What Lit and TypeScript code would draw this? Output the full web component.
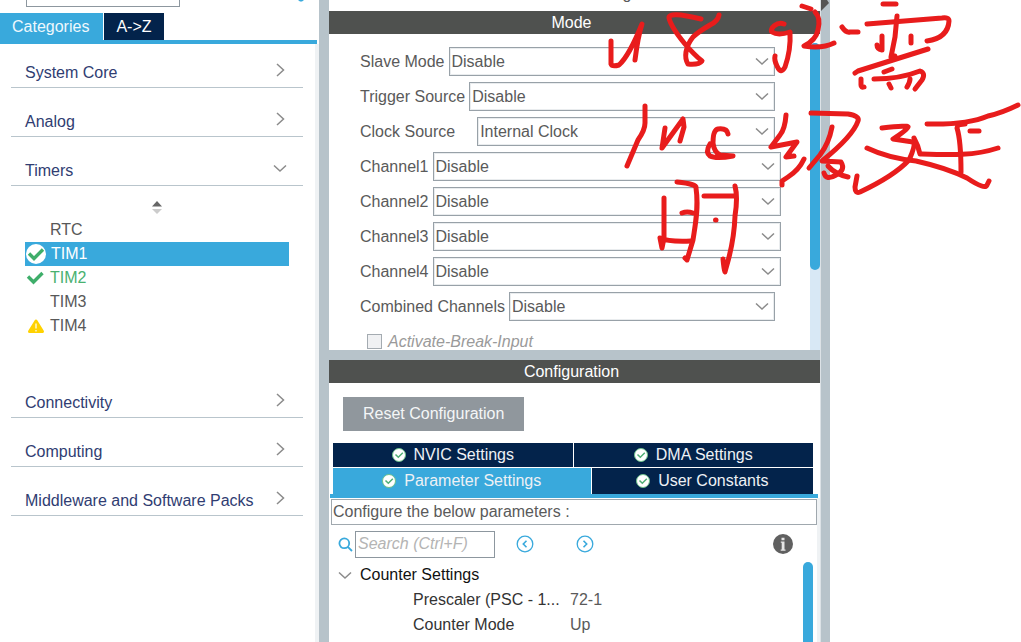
import { LitElement, html, css, svg } from "lit";
import { customElement, property, state } from "lit/decorators.js";
import { classMap } from "lit/directives/class-map.js";

type Status = "none" | "selected" | "ok" | "warning";

const shared = css`
  *, *::before, *::after { box-sizing: border-box; }
  button, input, select { font: inherit; letter-spacing: inherit; margin: 0; border-radius: 0; }
  button { border: 0; padding: 0; background: none; cursor: pointer; }
  svg { display: block; flex: none; }
`;

const chevron = (dir: "right" | "down") => dir === "right"
  ? html`<svg width="14" height="14" viewBox="0 0 14 14" fill="none" stroke="#8b8b8b" stroke-width="1.5"><path d="M4 1 L10.5 7 L4 13"/></svg>`
  : html`<svg width="14" height="14" viewBox="0 0 14 14" fill="none" stroke="#8b8b8b" stroke-width="1.5"><path d="M1 4.5 L7 10 L13 4.5"/></svg>`;

const statusIcon = (s: Status) => {
  if (s === "selected") return html`<svg width="20" height="20" viewBox="0 0 20 20"><circle cx="10" cy="10" r="10" fill="#fff"/><path d="M3 9.5 L8 14.5 L17 5.5" fill="none" stroke="#3fae6a" stroke-width="3.4"/></svg>`;
  if (s === "ok") return html`<svg width="20" height="20" viewBox="0 0 20 20"><path d="M2 8.5 L7.5 14 L16.5 5" fill="none" stroke="#3fae6a" stroke-width="3.4"/></svg>`;
  if (s === "warning") return html`<svg width="20" height="20" viewBox="0 0 20 20"><path d="M10 5 L16.5 15.5 H3.5 Z" fill="#ffd200" stroke="#ffd200" stroke-width="3" stroke-linejoin="round"/><path d="M10 7.5 V12.5 M10 14 V15.5" stroke="#fff" stroke-width="1.2"/></svg>`;
  return html`<svg width="20" height="20"></svg>`;
};

@customElement("category-panel")
class CategoryPanel extends LitElement {
  @state() private timer = "TIM1";

  static styles = [shared, css`
    :host { display: flex; flex-direction: column; min-width: 0; overflow: hidden; color: #303d72; }
    .top { display: flex; justify-content: space-between; align-items: flex-end; height: 7px; padding: 0 14px 0 26px; }
    .top input { flex: none; width: 154px; height: 28px; border: 1px solid #8d979f; }
    .gear { align-self: flex-start; height: 2px; overflow: hidden; }
    .tabs { display: flex; gap: 1px; height: 27px; margin-top: 6px; }
    .tab { padding: 0 12px; color: #fff; background: #03234b; line-height: 27px; }
    .tab.on { background: #39a9dc; padding: 0 14px 0 12px; color: #eef8fd; }
    .bar { height: 4px; background: #39a9dc; margin-right: 2px; }
    .body { flex: 1; display: flex; flex-direction: column; gap: 5px; margin-right: 4px; padding: 0 12px 0 11px; }
    .shell { flex: 1; display: flex; flex-direction: column; background: linear-gradient(to left, #eff2f4 4px, transparent 4px); }
    .row { display: flex; justify-content: space-between; align-items: flex-end; height: 44px; width: 100%; padding: 0 16px 5px 14px; border-bottom: 1px solid #b9c5cc; color: inherit; line-height: 18px; text-align: left; }
    .row svg { margin-bottom: 5px; }
    .timers { padding: 10px 14px 31px; }
    .sort { display: block; margin: 0 auto 3px; }
    ul { list-style: none; margin: 0; padding: 0; }
    .item { display: flex; align-items: center; gap: 4px; width: 100%; height: 24px; padding-left: 1px; color: #585858; }
    .item.ok { color: #49b170; }
    .item.on { background: #39a9dc; color: #fff; gap: 5px; }
  `];

  private row(name: string, open = false) {
    return html`<button class="row" aria-expanded=${open ? "true" : "false"}><span>${name}</span>${chevron(open ? "down" : "right")}</button>`;
  }

  render() {
    const timers: [string, Status][] = [["RTC", "none"], ["TIM1", "selected"], ["TIM2", "ok"], ["TIM3", "none"], ["TIM4", "warning"]];
    return html`
      <div class="top">
        <input type="text" aria-label="Search peripherals">
        <span class="gear"><svg width="8" height="2" viewBox="0 0 8 2"><path d="M1 0 H7 L5 1.5 H3 Z" fill="#39a9dc"/></svg></span>
      </div>
      <div class="tabs">
        <button class="tab on">Categories</button>
        <button class="tab">A-&gt;Z</button>
      </div>
      <div class="bar"></div>
      <div class="shell">
        <div class="body">
          ${this.row("System Core")}
          ${this.row("Analog")}
          ${this.row("Timers", true)}
          <div class="timers">
            <button class="sort" aria-label="Sort"><svg width="12" height="14" viewBox="0 0 12 14"><path d="M1 5.5 L6 0 L11 5.5 Z" fill="#666"/><path d="M1 8 L6 13 L11 8 Z" fill="#ccc"/></svg></button>
            <ul>
              ${timers.map(([name, s]) => html`<li><button class=${classMap({ item: true, ok: s === "ok", on: name === this.timer })}
                @click=${() => { this.timer = name; }}>${statusIcon(s)}<span>${name}</span></button></li>`)}
            </ul>
          </div>
          ${this.row("Connectivity")}
          ${this.row("Computing")}
          ${this.row("Middleware and Software Packs")}
        </div>
      </div>`;
  }
}

@customElement("mode-field")
class ModeField extends LitElement {
  @property() label = "";
  @property() value = "";
  @property({ type: Boolean }) spaced = false;

  static styles = [shared, css`
    :host { display: block; }
    .field { display: flex; align-items: center; gap: 4px; height: 29px; white-space: nowrap; }
    .field.spaced { gap: 22px; }
    .box { position: relative; flex: 1; min-width: 0; display: flex; }
    select { appearance: none; width: 100%; height: 29px; padding: 0 24px 0 2px; border: 1px solid #98a1a8; outline: 1px solid #e9ecee; outline-offset: -2px; background: #fff; color: #5a5a5a; }
    .box svg { position: absolute; right: 6px; top: 7px; pointer-events: none; }
  `];

  render() {
    return html`<div class=${classMap({ field: true, spaced: this.spaced })}>
      <label for="s">${this.label}</label>
      <span class="box"><select id="s"><option>${this.value}</option></select>${chevron("down")}</span>
    </div>`;
  }
}

@customElement("mode-panel")
class ModePanel extends LitElement {
  static styles = [shared, css`
    :host { display: flex; background: #fff; height: 316px; overflow: hidden; }
    .form { flex: 1; min-width: 0; display: flex; flex-direction: column; gap: 6px; padding: 13px 29px 0 31px; }
    .narrow { margin-right: 6px; }
    .check { flex: none; display: flex; align-items: center; gap: 6px; padding-left: 7px; height: 29px; color: #9a9a9a; font-style: italic; }
    .check input { appearance: none; width: 15px; height: 15px; border: 1px solid #a4abb1; background: #f0f1f3; }
    .track { width: 10px; margin-top: 9px; background: #d8e8f5; border-radius: 5px 5px 0 0; }
    .thumb { height: 227px; border-radius: 5px; background: #39a9dc; }
  `];

  render() {
    return html`
      <div class="form">
        <mode-field class="narrow" label="Slave Mode" value="Disable"></mode-field>
        <mode-field class="narrow" label="Trigger Source" value="Disable"></mode-field>
        <mode-field class="narrow" label="Clock Source" value="Internal Clock" spaced></mode-field>
        ${[1, 2, 3, 4].map(n => html`<mode-field label="Channel${n}" value="Disable"></mode-field>`)}
        <mode-field class="narrow" label="Combined Channels" value="Disable"></mode-field>
        <label class="check"><input type="checkbox" disabled>Activate-Break-Input</label>
      </div>
      <div class="track"><div class="thumb"></div></div>`;
  }
}

@customElement("config-panel")
class ConfigPanel extends LitElement {
  static styles = [shared, css`
    :host { display: flex; flex-direction: column; flex: 1; min-height: 0; background: #fff; padding-top: 14px; overflow: hidden; }
    .reset { align-self: flex-start; height: 34px; margin-left: 14px; padding: 0 20px; background: #90979d; color: #f4f6f7; }
    .tabs { display: flex; flex-direction: column; gap: 1px; margin: 12px 7px 0 4px; }
    .line { display: flex; gap: 1px; }
    .tab { flex: 1 1 0; display: flex; align-items: center; justify-content: center; gap: 8px; height: 24px; background: #03234b; color: #eef1f5; white-space: nowrap; }
    .line.low .tab { height: 26px; flex-grow: 221; }
    .line.low .tab.on { background: #39a9dc; flex-grow: 257; }
    .bar { height: 4px; margin: 0 2px 0 1px; background: #39a9dc; }
    .well { flex: 1; min-height: 0; display: flex; flex-direction: column; padding: 1px 3px 0 2px; background: linear-gradient(to left, #eff2f4 3px, transparent 3px); }
    .note { margin: 0; height: 26px; line-height: 24px; border: 1px solid #a0a8ae; padding-left: 1px; }
    .tools { display: flex; align-items: center; height: 28px; margin-top: 5px; padding: 0 24px 0 7px; }
    .tools input { width: 140px; height: 27px; margin-left: 2px; padding: 0 2px; border: 1px solid #8d979f; font-style: italic; }
    .tools input::placeholder { color: #b4b4b4; opacity: 1; }
    .prev { margin-left: 21px; }
    .next { margin-left: 42px; }
    .info { margin-left: auto; }
    .tree { flex: 1; min-height: 0; display: flex; justify-content: space-between; padding: 4px 4px 0 0; }
    table { align-self: flex-start; border-collapse: collapse; color: #333; }
    th, td { height: 25px; padding: 0; font-weight: 400; text-align: left; white-space: nowrap; line-height: 18px; }
    .group { color: #111; }
    .group button { display: flex; align-items: center; gap: 8px; padding-left: 7px; color: inherit; }
    .name { padding-left: 82px; width: 239px; }
    td { color: #5a5a5a; }
    .thumb { width: 10px; background: #39a9dc; border-radius: 5px 5px 0 0; }
  `];

  private tab(name: string, on = false) {
    return html`<button class=${classMap({ tab: true, on })}>
      <svg width="14" height="14" viewBox="0 0 14 14"><circle cx="7" cy="7" r="6.5" fill="#fff" stroke="#6cc08b"/><path d="M3.5 6.5 L6.3 9.3 L10.8 4.8" fill="none" stroke="#4fae75" stroke-width="1.5"/></svg>
      <span>${name}</span></button>`;
  }

  render() {
    const arrow = (d: string) => html`<svg width="18" height="18" viewBox="0 0 18 18" fill="none" stroke="#39a9dc"><circle cx="9" cy="9" r="7.8" stroke-width="1.3"/><path d=${d} stroke-width="1.6"/></svg>`;
    return html`
      <button class="reset">Reset Configuration</button>
      <div class="tabs">
        <div class="line">${this.tab("NVIC Settings")}${this.tab("DMA Settings")}</div>
        <div class="line low">${this.tab("Parameter Settings", true)}${this.tab("User Constants")}</div>
      </div>
      <div class="bar"></div>
      <div class="well">
        <p class="note">Configure the below parameters :</p>
        <div class="tools">
          <svg width="15" height="15" viewBox="0 0 15 15" fill="none" stroke="#39a9dc" stroke-width="1.8"><circle cx="6.3" cy="6.3" r="4.9"/><path d="M9.8 9.8 L14 14"/></svg>
          <input type="text" placeholder="Search (Ctrl+F)" aria-label="Search parameters">
          <button class="prev" aria-label="Previous">${arrow("M10.5 5.8 L7.3 9 L10.5 12.2")}</button>
          <button class="next" aria-label="Next">${arrow("M7.5 5.8 L10.7 9 L7.5 12.2")}</button>
          <button class="info" aria-label="Information"><svg width="20" height="20" viewBox="0 0 20 20"><circle cx="10" cy="10" r="10" fill="#606060"/><path d="M8.5 3.8 h3 v2.4 h-3 z M7.8 7.6 h3.7 v8 h1 v1.2 h-4.8 v-1.2 h1 v-6.8 h-.9 z" fill="#e6e6e6"/></svg></button>
        </div>
        <div class="tree">
          <table>
            <tr><th class="group" colspan="2"><button aria-expanded="true">${chevron("down")}Counter Settings</button></th></tr>
            <tr><th class="name" scope="row">Prescaler (PSC - 1...</th><td>72-1</td></tr>
            <tr><th class="name" scope="row">Counter Mode</th><td>Up</td></tr>
          </table>
          <div class="thumb"></div>
        </div>
      </div>`;
  }
}

const strokes = [
  "M611 41 L611 64 Q612 67 619 65 Q629 56 642 24 Q638 36 635 60",
  "M701 19 Q668 11 669 18 Q671 27 685 44 C691 51 697 57 702 61 Q699 65 688 64 C684 58 685 47 693 37 Q698 32 710 25 Q718 21 719 15",
  "M784 24 C777 21 769 29 772 32 Q778 36 790 32 Q791 50 785 67 Q781 75 777 66 Q774 60 775 56",
  "M802 6 L811 9",
  "M815 12 Q821 18 818 30 Q816 40 804 46 Q822 49 834 43",
  "M842 27 Q846 33 850 32 L858 32",
  "M645 106 L645 123 Q645 130 638 140 L627 166",
  "M665 128 L662 148 L683 119 L684 127 L680 141",
  "M728 134 Q727 128 718 129 Q713 130 713 143 Q714 152 720 155 L733 156 Q716 159 710 156 Q705 152 710 144",
  "M786 115 Q785 129 780 135 L771 147 L797 142 L786 157 L794 156",
  "M804 159 Q799 170 788 177 L782 181 L782 185",
  "M811 113 L848 114 Q860 116 858 121 Q853 136 822 161 L841 162 Q846 170 836 175 Q826 181 824 173",
  "M832 127 Q829 143 820 155 L809 168",
  "M828 166 Q835 174 848 177",
  "M883 4 L896 4",
  "M867 24 L942 18 Q949 17 949 21 Q948 38 927 41",
  "M897 16 L895 37 L891 57 L895 56",
  "M882 36 L882 50 Q877 49 877 45",
  "M911 36 V43",
  "M855 73 L858 71 L893 60 L928 49",
  "M884 72 L892 69",
  "M874 79 Q900 79 920 71 Q926 73 922 80 L915 89",
  "M861 79 V85 Q861 88 864 87",
  "M889 84 L891 88",
  "M910 79 Q910 82 907 87",
  "M882 128 Q909 125 908 127 Q907 130 893 139 L913 142 Q916 145 909 160 Q894 176 860 192 Q855 194 855 187 L857 176",
  "M867 148 Q888 158 916 161 Q947 168 967 178 Q985 190 987 185 L989 181",
  "M914 138 Q918 145 920 154 C950 155 974 156 998 148",
  "M927 124 Q967 125 988 116 Q1002 113 1018 105",
  "M965 124 Q957 124 957 128 Q961 141 961 172",
  "M970 131 H979",
  "M664 198 L664 238 L662 248 L660 238 Q668 242 691 241",
  "M677 182 Q697 184 696 188 C699 208 695 226 693 240 L687 260 L685 258",
  "M682 213 Q687 211 693 213",
  "M704 196 H735",
  "M735 186 Q738 197 735 216 C734 245 728 260 725 272 Q724 270 723 259",
  "M715.5 220 h.5",
];

@customElement("app-root")
class AppRoot extends LitElement {
  static styles = [shared, css`
    :host { display: block; position: relative; height: 100vh; overflow: hidden; background: #fff; color: #5a5a5a; font: 16px/18px "Liberation Sans", Arial, sans-serif; }
    .layout { display: grid; grid-template-columns: minmax(0, 319fr) 10px minmax(0, 491fr) 10px minmax(0, 191fr); height: 100%; }
    .split { background: #b7c3ca; }
    .split.right { border-left: 1px solid #dce2e6; }
    .middle { display: flex; flex-direction: column; min-width: 0; min-height: 0; background: #b7c3ca; }
    .title { display: flex; justify-content: center; align-items: flex-end; height: 11px; padding-bottom: 8px; background: #fff; overflow: hidden; white-space: nowrap; }
    h2 { flex: none; margin: 0; height: 23px; padding-right: 6px; background: #4f514f; color: #fff; font-size: 16px; line-height: 23px; font-weight: 400; text-align: center; }
    .gap { flex: none; height: 10px; }
    mode-panel { flex: none; }
    .ink { position: absolute; left: 0; top: 0; pointer-events: none; }
  `];

  render() {
    return html`
      <main class="layout">
        <category-panel></category-panel>
        <div class="split"></div>
        <section class="middle">
          <div class="title"><span>TIM1 Mode and Configuration</span></div>
          <h2>Mode</h2>
          <mode-panel></mode-panel>
          <div class="gap"></div>
          <h2>Configuration</h2>
          <config-panel></config-panel>
        </section>
        <div class="split right"><svg width="8" height="12" viewBox="0 0 8 12"><path d="M0 0 H6 L8 3 L0 11 Z" fill="#555"/></svg></div>
      </main>
      <svg class="ink" width="1021" height="642" viewBox="0 0 1021 642" fill="none" stroke="#e81c1c" stroke-width="5" stroke-linecap="round" stroke-linejoin="round" aria-hidden="true">
        ${strokes.map(d => svg`<path d=${d}></path>`)}
      </svg>`;
  }
}
